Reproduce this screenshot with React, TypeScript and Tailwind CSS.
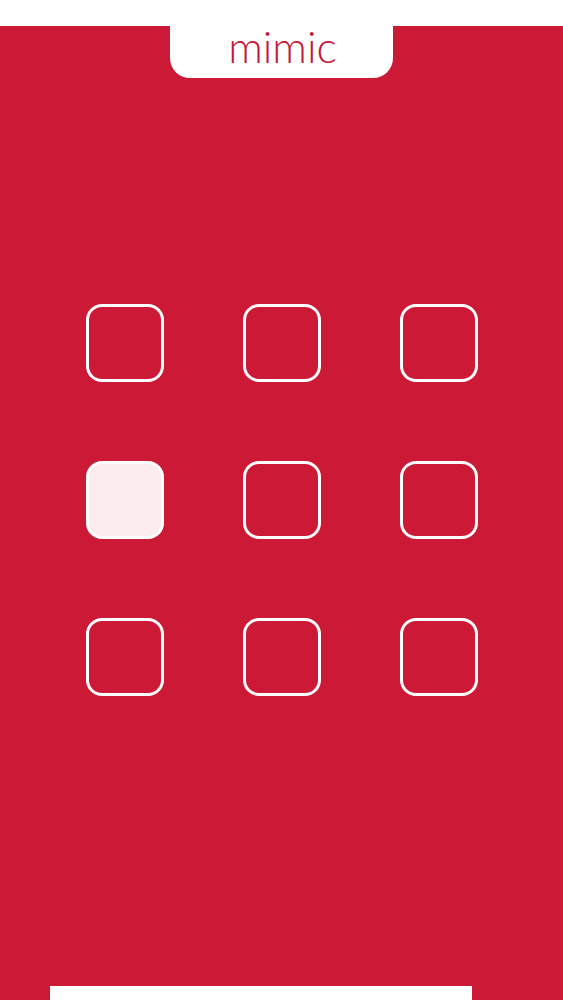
const cells = [false, false, false, true, false, false, false, false, false];

export default function App() {
  return (
    <div className="flex h-[1000px] w-full flex-col overflow-hidden bg-white">
      <div className="h-[26px] shrink-0 bg-white" />
      <div className="flex flex-1 flex-col bg-[#cc1936]">
        <div className="mx-auto flex h-[52px] w-[223px] items-center justify-center rounded-b-[20px] bg-white pl-[2px]">
          <span className="-mt-[12px] font-['Lato',sans-serif] text-[43px] font-light leading-none text-[#c21a3a]">
            mimic
          </span>
        </div>
        <div className="mx-auto mt-[226px] grid grid-cols-3 gap-x-[79px] gap-y-[79px]">
          {cells.map((on, i) => (
            <div
              key={i}
              className={
                on
                  ? "h-[78px] w-[78px] rounded-[16px] border-[3px] border-white bg-[#fcebef]"
                  : "h-[78px] w-[78px] rounded-[16px] border-[3px] border-white"
              }
            />
          ))}
        </div>
        <div className="flex-1" />
        <div className="ml-[50px] h-[14px] w-[422px] bg-white" />
      </div>
    </div>
  );
}
